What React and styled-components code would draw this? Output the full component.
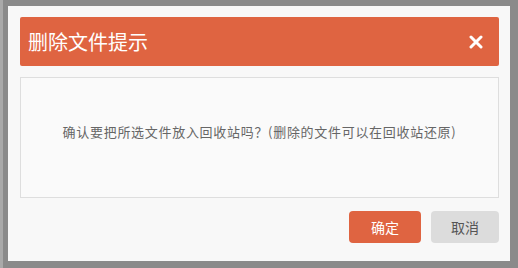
import React from 'react'
import styled, { createGlobalStyle } from 'styled-components'

const GlobalStyle = createGlobalStyle`
  html, body {
    margin: 0;
    padding: 0;
    background: #8a8a8a;
  }
  body {
    font-family: "Noto Sans CJK SC", "Noto Sans", sans-serif;
  }
`

const colors = {
  orange: '#df6441',
  frame: '#8a8a8a',
  panel: '#f8f8f8',
  text: '#666',
  line: '#dedede',
}

const Frame = styled.div`
  width: 518px;
  height: 268px;
  box-sizing: border-box;
  background: ${colors.frame};
  border-left: 3px solid #a9a9a9;
  padding: 6px 8px 7px 5px;
  display: flex;
`

const Panel = styled.div`
  flex: 1;
  background: ${colors.panel};
  padding: 11px 11px 0 12px;
  display: flex;
  flex-direction: column;
`

const Header = styled.div`
  height: 49px;
  background: ${colors.orange};
  border-radius: 2px;
  display: flex;
  align-items: center;
  justify-content: space-between;
  padding: 0 14px 0 8px;
  color: #fff;
`

const Title = styled.h3`
  margin: 0;
  font-size: 20px;
  font-weight: 400;
`

const Close = styled.button`
  border: 0;
  background: none;
  padding: 0;
  width: 18px;
  height: 18px;
  display: flex;
  align-items: center;
  justify-content: center;
  cursor: pointer;
`

const Body = styled.div`
  margin-top: 11px;
  height: 121px;
  box-sizing: border-box;
  border: 1px solid ${colors.line};
  background: #fafafa;
  display: flex;
  align-items: center;
  justify-content: center;
  color: ${colors.text};
  font-size: 13px;
  letter-spacing: 0.7px;
  padding-bottom: 13px;
`

const Footer = styled.div`
  margin-top: 13px;
  display: flex;
  justify-content: flex-end;
  gap: 10px;
`

const Button = styled.button`
  height: 32px;
  width: ${p => p.$width}px;
  border: 0;
  border-radius: 4px;
  font-family: inherit;
  font-size: 14px;
  background: ${p => (p.$primary ? colors.orange : '#dcdcdc')};
  color: ${p => (p.$primary ? '#fff' : '#555')};
  cursor: pointer;
`

export default function App() {
  return (
    <>
      <GlobalStyle />
      <Frame>
        <Panel>
          <Header>
            <Title>删除文件提示</Title>
            <Close aria-label="关闭">
              <svg width="14" height="14" viewBox="0 0 14 14">
                <path d="M2 2L12 12M12 2L2 12" stroke="#fff" strokeWidth="3" strokeLinecap="round" />
              </svg>
            </Close>
          </Header>
          <Body>确认要把所选文件放入回收站吗？(删除的文件可以在回收站还原)</Body>
          <Footer>
            <Button $primary $width={72}>确定</Button>
            <Button $width={68}>取消</Button>
          </Footer>
        </Panel>
      </Frame>
    </>
  )
}
